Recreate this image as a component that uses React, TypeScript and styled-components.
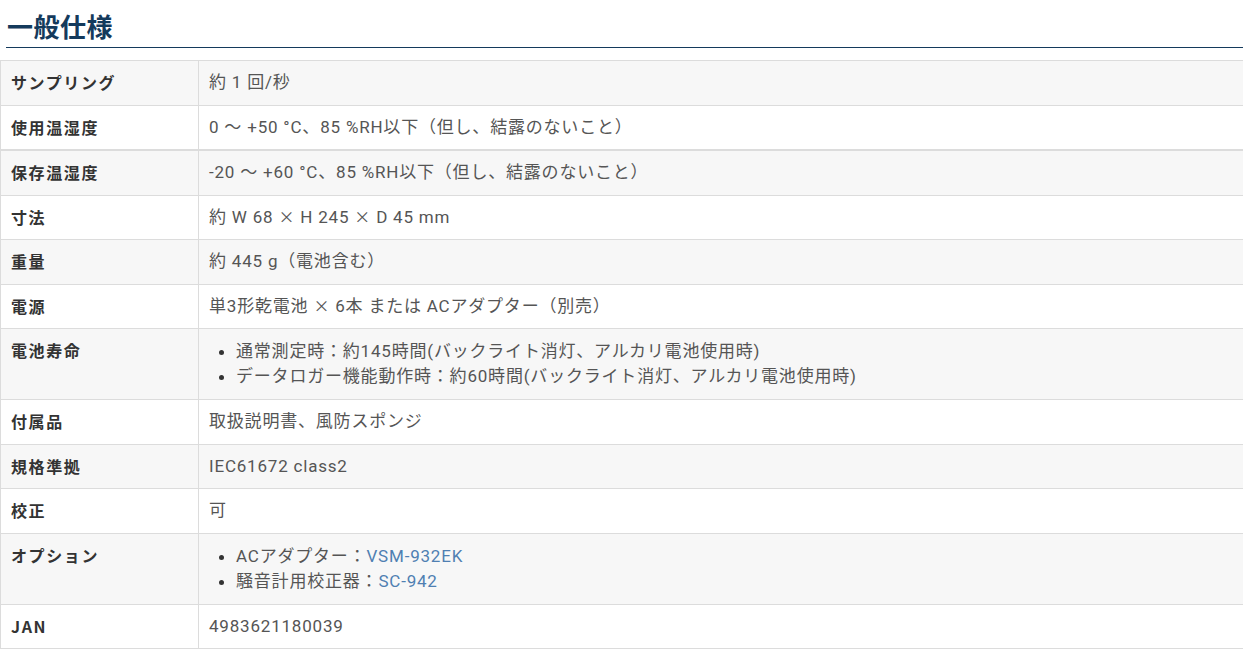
import React from "react";
import styled, { createGlobalStyle } from "styled-components";

const Global = createGlobalStyle`
  html, body { margin: 0; padding: 0; background: #fff; overflow: hidden; }
  body { font-family: Roboto, "Noto Sans CJK JP", sans-serif; }
`;

const Page = styled.div`
  padding-top: 10px;
`;

const Heading = styled.h2`
  margin: 0 0 12px 6px;
  padding: 0 0 6px 1px;
  font-family: "Noto Sans CJK JP", sans-serif;
  font-size: 26px;
  line-height: 31px;
  font-weight: 700;
  color: #143a5c;
  border-bottom: 1px solid #143a5c;
  letter-spacing: 0.5px;
`;

const Table = styled.table`
  width: calc(100% + 2px);
  border-collapse: collapse;
  font-size: 17px;
  line-height: 23.5px;
  letter-spacing: 0.8px;
`;

const Row = styled.tr<{ $striped: boolean; $thick?: boolean }>`
  background: ${(p) => (p.$striped ? "#f7f7f7" : "#ffffff")};
  border-top: 1px solid #dcdcdc;
  border-bottom: ${(p) => (p.$thick ? "2px" : "1px")} solid #dcdcdc;
`;

const Label = styled.th`
  width: 177px;
  text-align: left;
  vertical-align: top;
  padding: 10px;
  font-family: "Noto Sans CJK JP", sans-serif;
  font-size: 16px;
  letter-spacing: 1.6px;
  font-weight: 700;
  color: #333;
  border-left: 1px solid #dcdcdc;
  border-right: 1px solid #dcdcdc;
`;

const Value = styled.td`
  vertical-align: top;
  padding: 10px;
  color: #555;
  font-weight: 400;
`;

const Times = styled.span`
  font-family: "Noto Sans CJK JP", sans-serif;
  font-size: 16px;
  line-height: 1;
`;

const List = styled.ul`
  margin: 0;
  padding-left: 27px;
  line-height: 25px;
  li::marker { color: #333; }
`;

const Link = styled.a`
  color: #4f7fb2;
  text-decoration: none;
`;

type Item = { label: string; value: React.ReactNode; thick?: boolean };

const items: Item[] = [
  { label: "サンプリング", value: "約 1 回/秒" },
  { label: "使用温湿度", value: "0 ～ +50 °C、85 %RH以下（但し、結露のないこと）", thick: true },
  { label: "保存温湿度", value: "-20 ～ +60 °C、85 %RH以下（但し、結露のないこと）" },
  {
    label: "寸法",
    value: (
      <>
        約 W 68 <Times>×</Times> H 245 <Times>×</Times> D 45 mm
      </>
    ),
  },
  { label: "重量", value: "約 445 g（電池含む）" },
  {
    label: "電源",
    value: (
      <>
        単3形乾電池 <Times>×</Times> 6本 または ACアダプター（別売）
      </>
    ),
  },
  {
    label: "電池寿命",
    value: (
      <List>
        <li>通常測定時：約145時間(バックライト消灯、アルカリ電池使用時)</li>
        <li>データロガー機能動作時：約60時間(バックライト消灯、アルカリ電池使用時)</li>
      </List>
    ),
  },
  { label: "付属品", value: "取扱説明書、風防スポンジ" },
  { label: "規格準拠", value: "IEC61672 class2" },
  { label: "校正", value: "可" },
  {
    label: "オプション",
    value: (
      <List>
        <li>
          ACアダプター：<Link href="#">VSM-932EK</Link>
        </li>
        <li>
          騒音計用校正器：<Link href="#">SC-942</Link>
        </li>
      </List>
    ),
  },
  { label: "JAN", value: "4983621180039" },
];

export default function App() {
  return (
    <Page>
      <Global />
      <Heading>一般仕様</Heading>
      <Table>
        <tbody>
          {items.map((it, i) => (
            <Row key={it.label} $striped={i % 2 === 0} $thick={it.thick}>
              <Label>{it.label}</Label>
              <Value>{it.value}</Value>
            </Row>
          ))}
        </tbody>
      </Table>
    </Page>
  );
}
